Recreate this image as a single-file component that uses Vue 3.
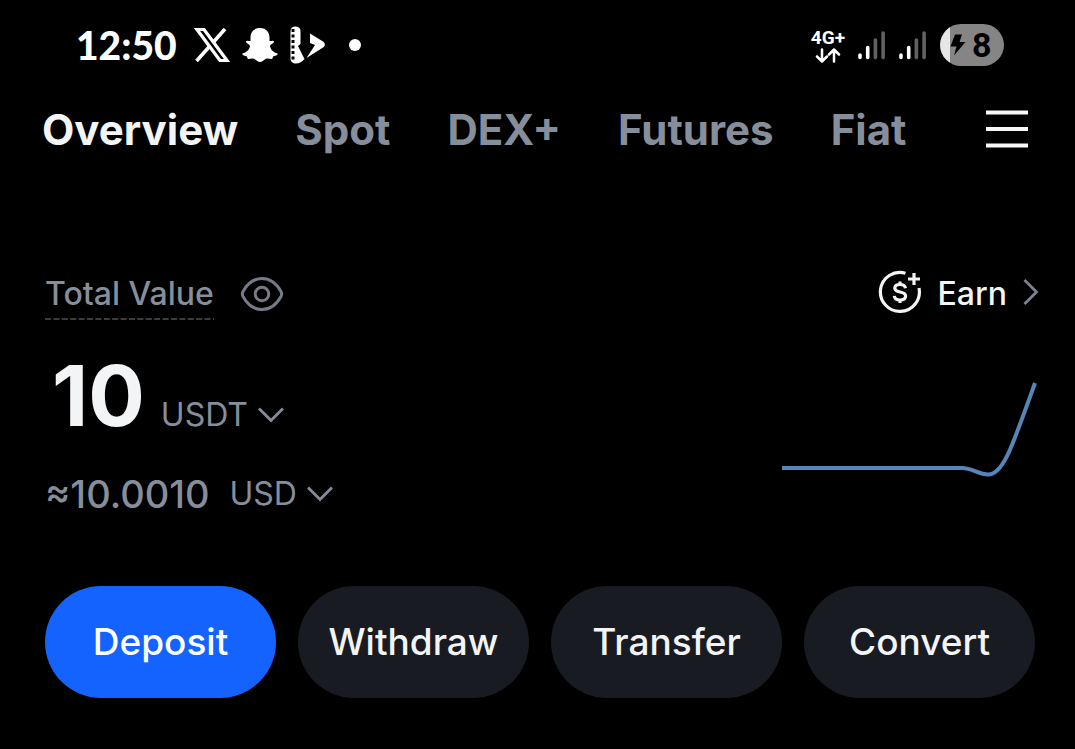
<script setup>
import { ref } from 'vue'

const tabs = ['Overview', 'Spot', 'DEX+', 'Futures', 'Fiat']
const activeTab = ref('Overview')
const actions = ['Deposit', 'Withdraw', 'Transfer', 'Convert']
</script>

<template>
  <div class="screen">
    <header class="status">
      <div class="status-left">
        <time class="clock">12:50</time>
        <svg class="app-x" width="36" height="34" viewBox="0 0 36 34" aria-hidden="true">
          <path d="M3 1.500H10L33 32.500H26Z" fill="none" stroke="#fff" stroke-width="3.200" />
          <path d="M31 1L19.500 14M15 19L2.500 33" fill="none" stroke="#fff" stroke-width="3.600" />
        </svg>
        <svg class="app-ghost" width="36" height="34" viewBox="0 0 36 34" aria-hidden="true">
          <path d="M18 0C11.500 0 8.500 4.500 8.500 9.500V13C7 13.500 5 12 4 13.500C3.500 15.500 7.500 16 8 18C7.500 21.500 4.500 24.500.5 25.500C-.5 27 2.500 28 5 28.500C5.500 29.500 5 31 6.500 31C8.500 31 10.500 30 12.500 31C14.500 32.500 16 34 18 34S21.500 32.500 23.500 31C25.500 30 27.500 31 29.500 31C31 31 30.500 29.500 31 28.500C33.500 28 36.500 27 35.500 25.500C31.500 24.500 28.500 21.500 28 18C28.500 16 32.500 15.500 32 13.500C31 12 29 13.500 27.500 13V9.500C27.500 4.500 24.500 0 18 0Z" fill="#fff" />
        </svg>
        <svg class="app-film" width="36" height="38" viewBox="0 0 36 38" aria-hidden="true">
          <path d="M.5 5C.5 2 2.500 .5 5.500.5S10.500 2 10.500 5V18L8 20L14.500 33C12 36 9 37.500 6 37.500C3 37.500 .5 36 .5 32.500Z" fill="#fff" />
          <path d="M3 3V36" stroke="#000" stroke-width="3" stroke-dasharray="3 2.500" />
          <path d="M20 7.500L33 15.500C35.500 17.500 35.500 20 33 21.500L16.500 32L25 19L20 17Z" fill="#fff" />
        </svg>
        <span class="dot"></span>
      </div>
      <div class="status-right">
        <div class="network">
          <span>4G+</span>
          <svg width="26" height="15" viewBox="0 0 26 15" fill="none" stroke="#fff" stroke-width="2.500" stroke-linecap="round" stroke-linejoin="round" aria-hidden="true">
            <path d="M7 1.500V13M2 8.500L7 13.500L12 8.500M19 13.500V2M14 6.500L19 1.500L24 6.500" />
          </svg>
        </div>
        <svg v-for="n in 2" :key="n" class="signal" width="28" height="30" viewBox="0 0 28 30" stroke-width="3.600" stroke-linecap="round" aria-hidden="true">
          <path d="M2 25V27.500M9.700 17.500V27.500" stroke="#fff" />
          <path d="M17.400 10V27.500M25.100 3V27.500" stroke="#626262" />
        </svg>
        <div class="battery">
          <svg width="16" height="22" viewBox="0 0 16 22" aria-hidden="true">
            <path d="M5 .5H12L9.500 8H15.500L4 21.500L6.500 12.500H.5Z" fill="#000" />
          </svg>
          <span>8</span>
        </div>
      </div>
    </header>

    <nav class="nav" aria-label="Assets">
      <button
        v-for="tab in tabs"
        :key="tab"
        type="button"
        class="tab"
        :class="{ active: tab === activeTab }"
        @click="activeTab = tab"
      >{{ tab }}</button>
      <button type="button" class="menu" aria-label="Menu">
        <svg width="42" height="40" viewBox="0 0 42 40" aria-hidden="true">
          <path d="M0 2.500H42M0 19H42M0 35.500H42" stroke="#f7f8fa" stroke-width="4" />
        </svg>
      </button>
    </nav>

    <main class="content">
      <div class="heading">
        <div class="total">
          <span class="total-label">Total Value
            <svg class="dashes" width="100%" height="2" aria-hidden="true">
              <path d="M0 1H2000" stroke="#3d3d3f" stroke-width="2" stroke-dasharray="6 2.400" />
            </svg>
          </span>
          <button type="button" class="eye" aria-label="Hide balance">
            <svg width="44" height="36" viewBox="0 0 44 36" fill="none" stroke="#767b87" stroke-width="3" aria-hidden="true">
              <path d="M3 15.500C8 6.500 14.500 2.500 22 2.500S36 6.500 41 15.500Q42.300 18 41 20.500C36 29.500 29.500 33.500 22 33.500S8 29.500 3 20.500Q1.700 18 3 15.500Z" />
              <circle cx="22" cy="18" r="6.800" />
            </svg>
          </button>
        </div>
        <a href="#earn" class="earn">
          <svg width="44" height="48" viewBox="0 0 44 48" fill="none" stroke="#f3f4f6" stroke-width="3.200" aria-hidden="true">
            <path d="M27.500 3.200A19.500 19.500 0 1 0 41 18" />
            <path d="M36 3V15M30 9H42" />
            <path d="M27.500 18.200C27 15.500 25 14.500 22 14.500C18.800 14.500 16.800 16 16.800 18.300C16.800 23.500 27.600 20.500 27.600 26C27.600 28.500 25.500 30 22 30C18.500 30 16.500 28.500 16.300 25.800M22 11.500V15M22 29.500V33" />
          </svg>
          <span>Earn</span>
          <svg width="16" height="32" viewBox="0 0 16 32" fill="none" stroke="#7d828e" stroke-width="2.800" aria-hidden="true">
            <path d="M1.500 2L13.500 14L1.500 26" />
          </svg>
        </a>
      </div>

      <div class="balance">
        <div class="amounts">
          <div class="amount">
            <strong>10</strong>
            <button type="button" class="unit">USDT
              <svg width="26" height="16" viewBox="0 0 26 16" fill="none" stroke="#858b98" stroke-width="3" aria-hidden="true">
                <path d="M1 1.500L13 13.500L25 1.500" />
              </svg>
            </button>
          </div>
          <div class="converted">
            <span>≈10.0010</span>
            <button type="button" class="unit">USD
              <svg width="26" height="16" viewBox="0 0 26 16" fill="none" stroke="#858b98" stroke-width="3" aria-hidden="true">
                <path d="M1 1.500L13 13.500L25 1.500" />
              </svg>
            </button>
          </div>
        </div>
        <svg class="trend" width="256" height="98" viewBox="0 0 256 98" role="img" aria-label="Balance trend">
          <path d="M0 88H180C190 88 197 94.500 206 94.500C221 94.500 229 70 253 3" fill="none" stroke="#5686b8" stroke-width="4" />
        </svg>
      </div>

      <div class="actions">
        <button v-for="(action, i) in actions" :key="action" type="button" :class="{ primary: i === 0 }">{{ action }}</button>
      </div>
    </main>
  </div>
</template>

<style>
body {
  background: #000;
}
</style>

<style scoped>
.screen {
  min-height: 100vh;
  box-sizing: border-box;
  background: #000;
  color: #f3f4f6;
  font-family: Inter, "Liberation Sans", sans-serif;
}
button {
  padding: 0;
  border: 0;
  background: none;
  color: inherit;
  font: inherit;
  cursor: pointer;
}
svg {
  display: block;
  flex: none;
}
.status {
  display: flex;
  justify-content: space-between;
  align-items: center;
  height: 90px;
  padding: 0 71px 0 76px;
  color: #fff;
}
.status-left,
.status-right {
  display: flex;
  align-items: center;
}
.status-left {
  gap: 12px;
}
.clock {
  margin-right: 5px;
  font-family: Lato, Inter, sans-serif;
  font-size: 39px;
  line-height: 48px;
  font-weight: 900;
}
.dot {
  width: 12px;
  height: 12px;
  margin-left: 11px;
  border-radius: 50%;
  background: #fff;
}
.status-right {
  gap: 13px;
}
.network {
  display: flex;
  flex-direction: column;
  align-items: center;
  font-family: Roboto, Inter, sans-serif;
  font-size: 19px;
  line-height: 20px;
  font-weight: 700;
}
.battery {
  display: flex;
  align-items: center;
  gap: 6px;
  box-sizing: border-box;
  width: 64px;
  height: 42px;
  padding-left: 10px;
  border-radius: 21px;
  background: linear-gradient(90deg, #e6e6e6 10px, #858585 10px);
  color: #000;
  font-family: Roboto, Inter, sans-serif;
  font-size: 34px;
  line-height: 42px;
  font-weight: 700;
}
.nav {
  display: flex;
  align-items: center;
  gap: 57px;
  height: 80px;
  padding: 0 47px 0 42px;
}
.tab {
  color: #878e9b;
  font-size: 42px;
  line-height: 52px;
  font-weight: 700;
}
.tab.active {
  color: #f3f4f6;
}
.menu {
  margin-left: auto;
}
.content {
  padding: 94px 40px 50px 45px;
}
.heading,
.total,
.earn {
  display: flex;
  align-items: center;
}
.heading {
  justify-content: space-between;
  height: 60px;
}
.total {
  gap: 26px;
  color: #878e9b;
  font-size: 32px;
  line-height: 40px;
  font-weight: 500;
}
.total-label {
  position: relative;
}
.dashes {
  position: absolute;
  left: 0;
  bottom: -6px;
}
.earn {
  gap: 16px;
  margin-right: -4px;
  color: #f3f4f6;
  font-size: 32px;
  line-height: 40px;
  font-weight: 500;
  text-decoration: none;
}
.balance {
  display: flex;
  justify-content: space-between;
  align-items: flex-start;
  margin-top: 22px;
  color: #878e9b;
}
.amount {
  display: flex;
  align-items: baseline;
  gap: 16px;
  height: 100px;
  padding-left: 7px;
}
.amount strong {
  color: #f3f4f6;
  font-size: 84px;
  line-height: 100px;
  font-weight: 700;
}
.unit {
  display: flex;
  align-items: center;
  gap: 10px;
  font-size: 32px;
  line-height: 40px;
  font-weight: 400;
}
.converted {
  display: flex;
  align-items: center;
  gap: 20px;
  margin-top: 26px;
  font-size: 38px;
  line-height: 44px;
  font-weight: 500;
}
.trend {
  margin: 34px -3px 0 0;
}
.actions {
  display: grid;
  grid-template-columns: repeat(4, 1fr);
  gap: 22px;
  margin-top: 70px;
}
.actions button {
  height: 112px;
  border-radius: 56px;
  background: #181b22;
  font-size: 37px;
  line-height: 48px;
  font-weight: 500;
}
.actions .primary {
  background: #1463ff;
  color: #fff;
}
</style>
